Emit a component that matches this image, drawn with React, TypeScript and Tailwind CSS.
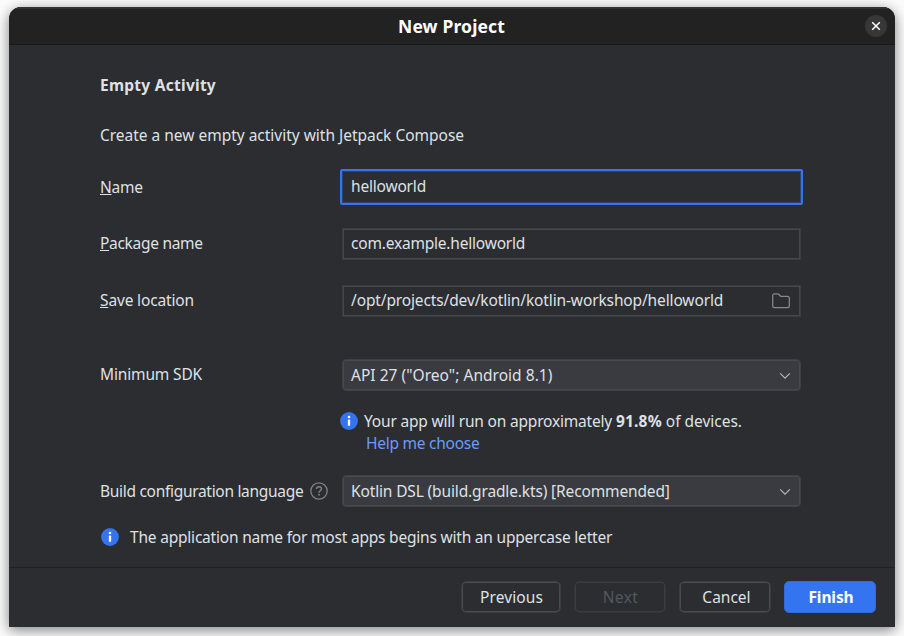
import type { ReactNode } from "react";

function InfoIcon() {
  return (
    <svg width="18" height="18" viewBox="0 0 18 18" className="shrink-0">
      <circle cx="9" cy="9" r="8.9" fill="#3574f0" />
      <circle cx="9" cy="5" r="1.3" fill="#fff" />
      <rect x="7.85" y="7.4" width="2.3" height="6.4" rx="0.5" fill="#fff" />
    </svg>
  );
}

function HelpIcon() {
  return (
    <svg width="18" height="18" viewBox="0 0 18 18" className="shrink-0" fill="none" stroke="#7d8188" strokeWidth="1.3">
      <circle cx="9" cy="9" r="8.2" />
      <path d="M6.5 7.1c0-1.4 1.1-2.4 2.5-2.4s2.5 1 2.5 2.3c0 1.7-2.5 1.9-2.5 3.7" strokeWidth="1.4" />
      <circle cx="9" cy="12.8" r="0.95" fill="#7d8188" stroke="none" />
    </svg>
  );
}

function FolderIcon() {
  return (
    <svg width="18" height="16" viewBox="0 0 18 16" className="shrink-0" fill="none" stroke="#85888e" strokeWidth="1.25">
      <path d="M.7 2.6C.7 1.5 1.4.8 2.5.8h3c.5 0 .9.2 1.2.5l2 2h6.7c1.1 0 1.9.8 1.9 1.9v7.6c0 1.1-.8 1.9-1.9 1.9H2.6c-1.1 0-1.9-.8-1.9-1.9z" />
    </svg>
  );
}

function Chevron() {
  return (
    <svg width="12" height="8" viewBox="0 0 12 8" className="mt-px shrink-0" fill="none" stroke="#b4b8bf" strokeWidth="1.2">
      <path d="M1.2 1.4 6 6.2l4.8-4.8" />
    </svg>
  );
}

function Mnemonic({ children }: { children: ReactNode }) {
  return <span className="underline decoration-1 underline-offset-1 [text-decoration-skip-ink:none]">{children}</span>;
}

function Row({ label, children }: { label: ReactNode; children: ReactNode }) {
  return (
    <div className="flex items-center">
      <div className="flex w-[242px] shrink-0 items-center">{label}</div>
      {children}
    </div>
  );
}

function Combo({ children }: { children: ReactNode }) {
  return (
    <div className="flex h-8 w-[459px] items-center justify-between rounded-[4px] border border-[#3e4044] bg-[#393b40] pr-[9px] pl-2 shadow-[inset_0_0_0_1px_#47494e]">
      {children}
      <Chevron />
    </div>
  );
}

export default function App() {
  return (
    <div className="h-[636px] w-[904px] overflow-hidden bg-[#fcfcfc] pt-[7px] pl-[9px] font-['Noto_Sans',sans-serif] text-[15.5px] leading-[22px] whitespace-nowrap text-[#dfe1e5]">
      <div className="flex h-[620px] w-[886px] flex-col overflow-hidden rounded-t-[12px] bg-[#2b2d30] shadow-[0_3px_14px_rgba(0,0,0,0.5)]">
        <header className="flex h-[38px] shrink-0 items-center border-t-2 border-b border-t-[#333333] border-b-[#181818] bg-[#222222] pr-2 pb-[2px] pl-[29px]">
          <h1 className="flex-1 text-center text-[17.5px] font-bold tracking-[0.14px] text-white">New Project</h1>
          <button className="flex size-[22px] items-center justify-center rounded-full bg-[#373737]">
            <svg width="10" height="10" viewBox="0 0 10 10" fill="none" stroke="#fff" strokeWidth="1.5">
              <path d="m1.2 1.2 7.6 7.6M8.8 1.2 1.2 8.8" />
            </svg>
          </button>
        </header>

        <main className="flex flex-1 flex-col pt-[29px] pl-[91px]">
          <h2 className="font-bold tracking-[0.26px]">Empty Activity</h2>
          <p className="mt-7 tracking-[-0.015px]">Create a new empty activity with Jetpack Compose</p>

          <div className="mt-[23px]">
            <Row label={<span className="tracking-[-0.25px]"><Mnemonic>N</Mnemonic>ame</span>}>
              <div className="-ml-0.5 flex h-9 w-[463px] items-center rounded-[2px] border-2 border-[#3574f0] pb-0.5 pl-[9px] shadow-[inset_0_0_0_1px_#2c4270]">
                <span className="tracking-[-0.19px]">helloworld</span>
              </div>
            </Row>
          </div>

          <div className="mt-[23px]">
            <Row label={<span className="pb-0.5 tracking-[-0.3px]"><Mnemonic>P</Mnemonic>ackage name</span>}>
              <div className="flex h-8 w-[459px] items-center border border-[#3a3c40] pb-0.5 pl-2 shadow-[inset_0_0_0_1px_#45474b]">
                <span className="tracking-[-0.2px]">com.example.helloworld</span>
              </div>
            </Row>
          </div>

          <div className="mt-[25px]">
            <Row label={<span className="pb-0.5 tracking-[-0.15px]"><Mnemonic>S</Mnemonic>ave location</span>}>
              <div className="flex h-8 w-[459px] items-center justify-between border border-[#3a3c40] pr-[10px] pl-2 shadow-[inset_0_0_0_1px_#45474b]">
                <span className="pb-0.5 tracking-[-0.13px]">/opt/projects/dev/kotlin/kotlin-workshop/helloworld</span>
                <FolderIcon />
              </div>
            </Row>
          </div>

          <div className="mt-[42px]">
            <Row label={<span className="pb-0.5 tracking-[-0.15px]">Minimum SDK</span>}>
              <Combo><span className="tracking-[0.03px]">API 27 ("Oreo"; Android 8.1)</span></Combo>
            </Row>
          </div>

          <div className="mt-[19px] ml-[240px] flex items-center gap-1.5">
            <InfoIcon />
            <p>
              <span className="tracking-[-0.19px]">Your app will run on approximately </span>
              <b className="tracking-[0.2px]">91.8%</b>
              <span className="tracking-[-0.02px]"> of devices.</span>
            </p>
          </div>
          <a className="ml-[266px] tracking-[-0.25px] text-[#6b9bfa]">Help me choose</a>

          <div className="mt-[21px]">
            <Row label={<><span className="mr-[6px] w-[204px] tracking-[-0.3px]">Build configuration language</span><HelpIcon /></>}>
              <Combo><span className="tracking-[-0.14px]">Kotlin DSL (build.gradle.kts) [Recommended]</span></Combo>
            </Row>
          </div>

          <div className="mt-[19px] ml-px flex items-center gap-[11px]">
            <InfoIcon />
            <p className="tracking-[-0.205px]">The application name for most apps begins with an uppercase letter</p>
          </div>
        </main>

        <footer className="flex h-[60px] shrink-0 items-center justify-end gap-[13px] border-t border-[#1e1f22] pr-[19px] pb-px">
          <button className="h-8 w-[100px] rounded-[5px] border border-[#3a3c40] pl-px tracking-[0.1px] shadow-[inset_0_0_0_1px_#494b50]">Previous</button>
          <button className="h-8 w-[92px] rounded-[5px] border border-[#323438] pl-px tracking-[0.4px] text-[#54575d] shadow-[inset_0_0_0_1px_#3b3d41]">Next</button>
          <button className="h-8 w-[92px] rounded-[5px] border border-[#3a3c40] pl-[3px] shadow-[inset_0_0_0_1px_#494b50]">Cancel</button>
          <button className="h-8 w-[92px] rounded-[5px] border border-[#3369d6] bg-[#3574f0] pl-0.5 font-bold tracking-[-0.1px] text-white">Finish</button>
        </footer>
      </div>
    </div>
  );
}
